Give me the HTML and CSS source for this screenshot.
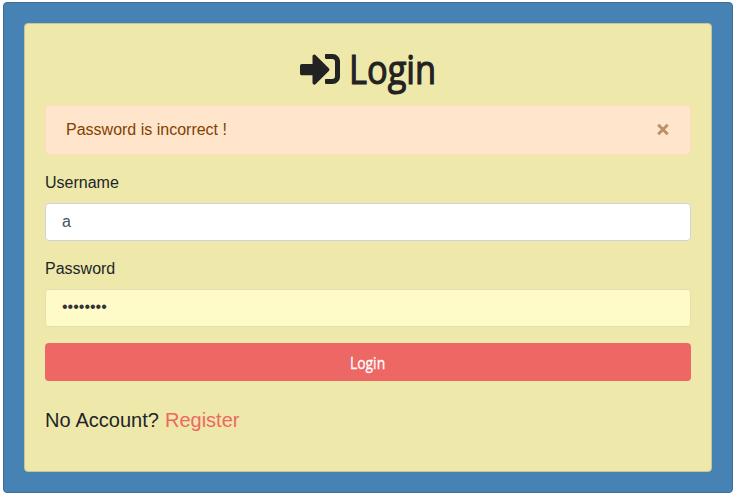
FILE: index.html
```html
<!DOCTYPE html>
<html lang="en">
<head>
<meta charset="utf-8">
<title>Login</title>
<link rel="stylesheet" href="styles.css">
</head>
<body>
<main class="panel">
  <section class="card">
    <h1 class="title">
      <svg class="title-icon" viewBox="0 0 512 512" aria-hidden="true"><path fill="currentColor" d="M416 448h-84c-6.600 0-12-5.400-12-12v-40c0-6.600 5.400-12 12-12h84c17.700 0 32-14.300 32-32V160c0-17.700-14.300-32-32-32h-84c-6.600 0-12-5.400-12-12V76c0-6.600 5.400-12 12-12h84c53 0 96 43 96 96v192c0 53-43 96-96 96zm-47-201L201 79c-15-15-41-4.500-41 17v96H24c-13.300 0-24 10.700-24 24v96c0 13.300 10.700 24 24 24h136v96c0 21.500 26 32 41 17l168-168c9.300-9.400 9.300-24.600 0-34z"/></svg>
      <span class="title-text">Login</span>
    </h1>
    <div class="alert">
      <span>Password is incorrect !</span>
      <button class="close" type="button" aria-label="Close"><svg viewBox="0 0 14 14"><path d="M2.200 1.700l9.500 9.500M11.700 1.700l-9.500 9.500"/></svg></button>
    </div>
    <form>
      <label for="username">Username</label>
      <input class="field" id="username" type="text" value="a">
      <label for="password">Password</label>
      <input class="field filled" id="password" type="password" value="password">
      <button class="submit" type="button"><span class="submit-text">Login</span></button>
    </form>
    <p class="register">No Account? <a href="#">Register</a></p>
  </section>
</main>
</body>
</html>
```
FILE: styles.css
```css
* { box-sizing: border-box; }
body {
  margin: 0;
  background: #fff;
  color: #212529;
  font: 16px/24px "Liberation Sans", Arial, sans-serif;
  overflow: hidden;
}
.panel {
  width: 730px;
  height: 491px;
  margin: 2px 0 0 3px;
  padding: 20px;
  background: #4682b4;
  border: 1px solid #3b6e99;
  border-radius: 4px;
}
.card {
  height: 449px;
  padding: 20px;
  background: #eee8aa;
  border: 1px solid #cac591;
  border-radius: 4px;
}
.title {
  display: flex;
  height: 53px;
  margin: 0 0 8px;
  padding-left: 255px;
  color: #222;
  font: 500 40px/50px "Open Sans", sans-serif;
}
.title-icon { width: 40px; height: 40px; margin: 5px 9px 0 0; }
.title-text {
  transform: scaleX(.86);
  transform-origin: left;
  -webkit-text-stroke: 1.2px #222;
}
.alert {
  display: flex;
  justify-content: space-between;
  height: 50px;
  margin-bottom: 16px;
  padding: 12px 20px;
  color: #834100;
  background: #fee5cc;
  border: 1px solid #fedcbd;
  border-radius: 4px;
}
.close {
  width: 14px;
  height: 24px;
  padding: 0;
  background: none;
  border: 0;
}
.close svg { display: block; width: 14px; height: 14px; }
.close path { fill: none; stroke: #bf9066; stroke-width: 3; }
label { display: block; margin-bottom: 8px; }
.field {
  display: block;
  width: 100%;
  height: 38px;
  margin-bottom: 16px;
  padding: 6px 16px;
  font: inherit;
  color: #495057;
  background: #fff;
  border: 1px solid #ced4da;
  border-radius: 4px;
}
.filled { padding: 5px 16px 7px; color: #333; background: #fffbc8; border-color: #e8dfae; }
.submit {
  display: block;
  width: 100%;
  height: 38px;
  padding: 2px 0 0;
  color: #fff;
  background: #ed6864;
  border: 0;
  border-radius: 4px;
  font: 17px/24px "Open Sans", sans-serif;
}
.submit-text { display: inline-block; transform: scaleX(.82); -webkit-text-stroke: .3px #fff; }
.register { margin: 24px 0 0; font-size: 20px; line-height: 30px; word-spacing: .5px; }
.register a { color: #ed6864; text-decoration: none; }
```
